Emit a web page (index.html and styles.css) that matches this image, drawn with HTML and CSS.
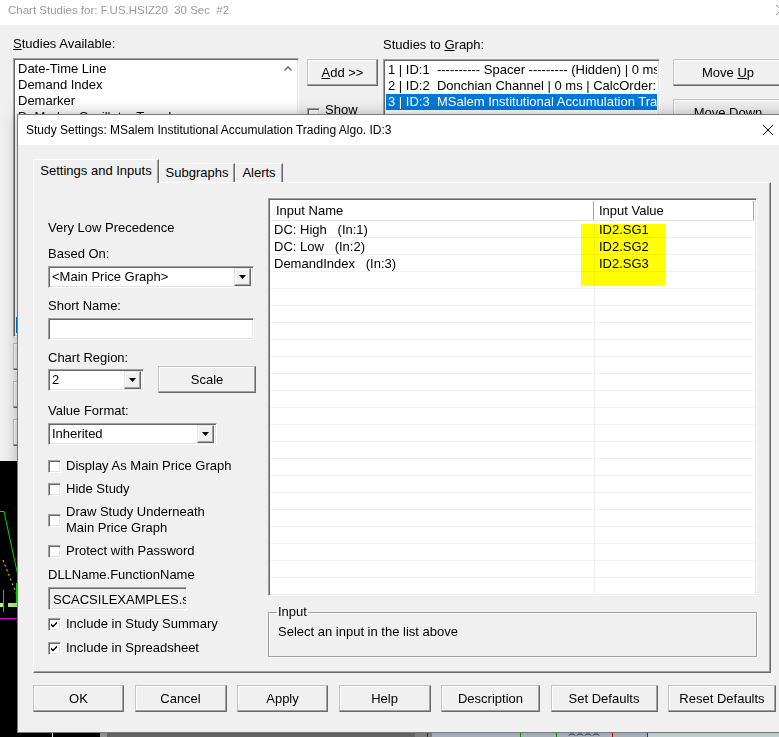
FILE: index.html
```html
<!DOCTYPE html>
<html lang="en">
<head>
	<meta charset="utf-8">
	<title>Chart Studies</title>
	<link rel="stylesheet" href="styles.css">
</head>
<body>
<div class="desktop">
	<!-- chart window behind everything -->
	<svg class="chart" width="779" height="737" viewBox="0 0 779 737" aria-hidden="true">
		<rect width="779" height="737" fill="#000"/>
		<polyline points="0,511.5 4,511.5 18,576" fill="none" stroke="#00e400"/>
		<line x1="3" y1="560" x2="18" y2="598" stroke="#ffff00" stroke-dasharray="2 3"/>
		<line x1="3.5" y1="590" x2="3.5" y2="612" stroke="#00e400"/>
		<line x1="16.5" y1="583" x2="16.5" y2="605" stroke="#00e400"/>
		<rect x="0" y="603" width="3" height="4" fill="#b8f08c"/>
		<rect x="8" y="603" width="9" height="4" fill="#b8f08c"/>
		<line x1="0" y1="618.5" x2="18" y2="618.5" stroke="#e000e0"/>
		<line x1="52.5" y1="728" x2="52.5" y2="737" stroke="#fff"/>
		<rect x="100" y="728" width="7" height="9" fill="#a0a0a0"/>
		<rect x="107" y="728" width="308" height="9" fill="#6e6e6e"/>
		<rect x="415" y="728" width="17" height="9" fill="#8c8c8c"/>
		<line x1="427.5" y1="728" x2="427.5" y2="737" stroke="#c00000"/>
		<rect x="432" y="728" width="215" height="9" fill="#b8c2cb"/>
		<rect x="647" y="728" width="132" height="9" fill="#d4e6e6"/>
		<line x1="520.5" y1="728" x2="520.5" y2="737" stroke="#00a000"/>
		<line x1="556.5" y1="728" x2="556.5" y2="737" stroke="#00a000"/>
		<line x1="612.5" y1="728" x2="612.5" y2="737" stroke="#d00000"/>
		<line x1="647.5" y1="728" x2="647.5" y2="737" stroke="#d00000"/>
		<path d="M569 735.5c1-2 5-2 6 0M577 735.5c1-2 5-2 6 0M585 735.5c1-2 5-2 6 0M593 735.5c1-2 5-2 6 0" fill="none" stroke="#222"/>
	</svg>

	<!-- Chart Studies window -->
	<section class="window studies">
		<header class="titlebar titlebar--inactive">
			<span>Chart Studies for: F.US.HSIZ20&nbsp; 30 Sec&nbsp; #2</span>
			<svg class="titlebar__close" width="10" height="10" viewBox="0 0 10 10" aria-hidden="true"><path d="M0 0L10 10M10 0L0 10" stroke="#999" stroke-width="1"/></svg>
		</header>

		<div class="studies__body">
			<div class="studies__available">
				<div class="studies__label"><u>S</u>tudies Available:</div>
				<div class="listbox listbox--available">
					<ul>
						<li>Date-Time Line</li>
						<li>Demand Index</li>
						<li>Demarker</li>
						<li>DeMarker Oscillator Type I</li>
						<li></li><li></li><li></li><li></li><li></li><li></li>
						<li></li><li></li><li></li><li></li><li></li><li></li>
						<li class="is-selected"></li>
					</ul>
					<svg class="listbox__arrow" width="8" height="5" viewBox="0 0 8 5" aria-hidden="true"><path d="M0.5 4.5L4 1L7.5 4.5" fill="none" stroke="#606060" stroke-width="1.3"/></svg>
				</div>
				<button class="btn studies__side-btn" tabindex="-1"></button>
				<button class="btn studies__side-btn" tabindex="-1"></button>
				<button class="btn studies__side-btn" tabindex="-1"></button>
			</div>

			<div class="studies__add">
				<button class="btn"><u>A</u>dd &gt;&gt;</button>
				<div class="check check--show"><span class="check__box"></span>Show</div>
			</div>

			<div class="studies__graph">
				<div class="studies__label">Studies to <u>G</u>raph:</div>
				<div class="listbox listbox--graph">
					<ul>
						<li>1 | ID:1&nbsp; ---------- Spacer --------- (Hidden) | 0 ms |</li>
						<li>2 | ID:2&nbsp; Donchian Channel | 0 ms | CalcOrder: 1</li>
						<li class="is-selected">3 | ID:3&nbsp; MSalem Institutional Accumulation Trad</li>
					</ul>
				</div>
			</div>

			<div class="studies__move">
				<button class="btn">Move <u>U</u>p</button>
				<button class="btn">Move <u>D</u>own</button>
			</div>
		</div>
	</section>

	<!-- Study Settings dialog -->
	<section class="window dialog" role="dialog" aria-label="Study Settings">
		<header class="titlebar">
			<span>Study Settings: MSalem Institutional Accumulation Trading Algo. ID:3</span>
			<svg class="titlebar__close" width="10" height="10" viewBox="0 0 10 10" aria-hidden="true"><path d="M0 0L10 10M10 0L0 10" stroke="#000" stroke-width="1"/></svg>
		</header>

		<div class="dialog__body">
			<nav class="tabs">
				<span class="tab tab--active">Settings and Inputs</span>
				<span class="tab tab--subgraphs">Subgraphs</span>
				<span class="tab tab--alerts">Alerts</span>
			</nav>

			<div class="tab-panel">
				<div class="settings">
					<div class="settings__note">Very Low Precedence</div>

					<div class="field">
						<span>Based On:</span>
						<div class="combo combo--based">
							<span class="combo__value">&lt;Main Price Graph&gt;</span>
							<span class="combo__btn"></span>
						</div>
					</div>

					<div class="field">
						<span>Short Name:</span>
						<div class="textbox textbox--short"></div>
					</div>

					<div class="field">
						<span>Chart Region:</span>
						<div class="field__row">
							<div class="combo combo--region">
								<span class="combo__value">2</span>
								<span class="combo__btn"></span>
							</div>
							<button class="btn btn--scale">Scale</button>
						</div>
					</div>

					<div class="field">
						<span>Value Format:</span>
						<div class="combo combo--format">
							<span class="combo__value">Inherited</span>
							<span class="combo__btn"></span>
						</div>
					</div>

					<div class="checks checks--options">
						<div class="check"><span class="check__box"></span>Display As Main Price Graph</div>
						<div class="check"><span class="check__box"></span>Hide Study</div>
						<div class="check"><span class="check__box"></span>Draw Study Underneath<br>Main Price Graph</div>
						<div class="check"><span class="check__box"></span>Protect with Password</div>
					</div>

					<div class="field field--dll">
						<span>DLLName.FunctionName</span>
						<div class="textbox textbox--dll">SCACSILEXAMPLES.s</div>
					</div>

					<div class="checks checks--include">
						<div class="check"><span class="check__box is-checked"></span>Include in Study Summary</div>
						<div class="check"><span class="check__box is-checked"></span>Include in Spreadsheet</div>
					</div>
				</div>

				<div class="inputs">
					<div class="listview">
						<div class="listview__head">
							<span class="listview__col listview__col--name">Input Name</span>
							<span class="listview__col listview__col--value">Input Value</span>
						</div>
						<div class="listview__rows">
							<div class="listview__row"><span class="listview__col listview__col--name">DC: High&nbsp;&nbsp; (In:1)</span><span class="listview__col listview__col--value">ID2.SG1</span></div>
							<div class="listview__row"><span class="listview__col listview__col--name">DC: Low&nbsp;&nbsp; (In:2)</span><span class="listview__col listview__col--value">ID2.SG2</span></div>
							<div class="listview__row"><span class="listview__col listview__col--name">DemandIndex&nbsp;&nbsp; (In:3)</span><span class="listview__col listview__col--value">ID2.SG3</span></div>
						</div>
						<div class="listview__marker" aria-hidden="true"></div>
					</div>

					<fieldset class="groupbox">
						<legend>Input</legend>
						Select an input in the list above
					</fieldset>
				</div>
			</div>

			<div class="dialog__buttons">
				<button class="btn btn--ok">OK</button>
				<button class="btn btn--cancel">Cancel</button>
				<button class="btn btn--apply">Apply</button>
				<button class="btn btn--help">Help</button>
				<button class="btn btn--desc">Description</button>
				<button class="btn btn--set">Set Defaults</button>
				<button class="btn btn--reset">Reset Defaults</button>
			</div>
		</div>
	</section>
</div>
</body>
</html>
```

FILE: styles.css
```css
/* PAGE */
* {
	box-sizing: border-box;
}
html,
body {
	margin: 0;
	height: 100%;
}
body {
	background: #000;
	color: #000;
	font: 13px/16px "Liberation Sans", Arial, sans-serif;
	overflow: hidden;
}
ul {
	list-style: none;
	margin: 0;
	padding: 0;
}
button {
	color: inherit;
	font: inherit;
	padding: 0;
}
.desktop {
	height: 737px;
	overflow: hidden;
	position: relative;
	width: 779px;
}
.chart {
	display: block;
	left: 0;
	position: absolute;
	top: 0;
}

/* WINDOW CHROME */
.window {
	background: #f0f0f0;
	position: absolute;
}
.titlebar {
	align-items: center;
	background: #fff;
	display: flex;
	font-size: 11.5px;
	justify-content: space-between;
	padding-left: 8px;
	white-space: nowrap;
}
.titlebar--inactive {
	color: #999;
}

/* classic 3d edges */
.btn {
	background: #f0f0f0;
	border: 1px solid;
	border-color: #c4c4c4 #696969 #696969 #c4c4c4;
	box-shadow: inset -1px -1px #a0a0a0, inset 1px 1px #fff;
	height: 27px;
	text-align: center;
}
.listbox,
.textbox,
.combo,
.listview,
.check__box {
	border: 1px solid;
	border-color: #a0a0a0 #fff #fff #a0a0a0;
	box-shadow: inset 1px 1px #696969, inset -1px -1px #e3e3e3;
}

/* CHART STUDIES WINDOW */
.studies {
	height: 461px;
	left: 0;
	top: 0;
	width: 800px;
}
.studies .titlebar {
	height: 25px;
	padding-bottom: 5px;
	padding-right: 14px;
}
.studies__body {
	align-items: flex-start;
	display: flex;
	padding: 11px 0 0 13px;
}
.studies__label {
	height: 16px;
}
.studies__available {
	display: flex;
	flex-direction: column;
	width: 286px;
}
.listbox {
	background: #fff;
	overflow: hidden;
	padding: 2px;
	position: relative;
	white-space: nowrap;

	li {
		height: 16px;
		overflow: hidden;
		padding-left: 2px;
	}
	.is-selected {
		background: #0078d7;
		color: #fff;
	}
}
.listbox--available {
	height: 279px;
	margin-top: 6px;
}
.listbox__arrow {
	position: absolute;
	right: 6px;
	top: 7px;
}
.studies__side-btn {
	margin-top: 6px;
	width: 110px;
}
.studies__side-btn + .studies__side-btn {
	margin-top: 11px;
}
.studies__add {
	margin: 23px 0 0 8px;
	width: 71px;

	.btn {
		width: 71px;
	}
}
.check--show {
	align-items: flex-start;
	margin-top: 13px;

	.check__box {
		margin-top: 9px;
	}
}
.studies__graph {
	margin: 1px 0 0 5px;
	width: 277px;
}
.listbox--graph {
	height: 278px;
	margin-top: 6px;
}
.studies__move {
	display: flex;
	flex-direction: column;
	gap: 13px;
	margin: 23px 0 0 13px;
	width: 110px;
}

/* STUDY SETTINGS DIALOG */
.dialog {
	border: 1px solid #7a7a7a;
	box-shadow: 0 0 14px rgba(0, 0, 0, 0.28);
	height: 619px;
	left: 17px;
	top: 114px;
	width: 775px;

	.titlebar {
		font-size: 12px;
		height: 30px;
		padding-right: 18px;
	}
}
.dialog__body {
	padding: 14px 0 0 15px;
}
.tabs {
	align-items: flex-end;
	display: flex;
	height: 23px;
	position: relative;
	z-index: 1;
}
.tab {
	background: #f0f0f0;
	border: 1px solid;
	border-bottom: 0;
	border-color: #fff #696969 transparent #fff;
	box-shadow: inset -1px 0 #a0a0a0;
	height: 19px;
	line-height: 18px;
	text-align: center;
	white-space: nowrap;
}
.tab--active {
	height: 24px;
	line-height: 22px;
	margin-bottom: -1px;
	width: 126px;
}
.tab--subgraphs {
	width: 76px;
}
.tab--alerts {
	width: 48px;
}
.tab-panel {
	border: 1px solid;
	border-color: #fff #696969 #696969 #fff;
	box-shadow: inset -1px -1px #a0a0a0;
	display: grid;
	gap: 12px;
	grid-template-columns: 208px 489px;
	height: 491px;
	padding: 15px 0 0 14px;
	width: 738px;
}

/* left column */
.settings {
	display: flex;
	flex-direction: column;
}
.settings__note {
	margin-top: 22px;
}
.field {
	display: flex;
	flex-direction: column;
	gap: 4px;
	margin-top: 10px;
}
.field__row {
	align-items: center;
	display: flex;
	gap: 14px;
	margin-top: -4px;
}
.field--dll {
	margin-top: 8px;
}
.combo {
	align-items: center;
	background: #fff;
	display: flex;
	height: 22px;
	padding: 2px;
}
.combo__value {
	flex: 1;
	overflow: hidden;
	padding-left: 1px;
	white-space: nowrap;
}
.combo__btn {
	background: #f0f0f0 no-repeat center / 7px 4px url("data:image/svg+xml,%3Csvg xmlns='http://www.w3.org/2000/svg' width='7' height='4'%3E%3Cpath d='M0 0h7L3.5 4z'/%3E%3C/svg%3E");
	border: 1px solid;
	border-color: #e3e3e3 #696969 #696969 #e3e3e3;
	box-shadow: inset -1px -1px #a0a0a0, inset 1px 1px #fff;
	height: 18px;
	width: 17px;
}
.combo--based {
	width: 206px;
}
.combo--region {
	width: 96px;
}
.combo--format {
	width: 169px;
}
.btn--scale {
	width: 98px;
}
.textbox {
	background: #fff;
	height: 22px;
	overflow: hidden;
	padding: 3px 4px;
	white-space: nowrap;
}
.textbox--short {
	width: 206px;
}
.textbox--dll {
	background: #f0f0f0;
	height: 23px;
	padding-top: 4px;
	width: 139px;
}
.checks {
	display: flex;
	flex-direction: column;
	gap: 7px;
}
.checks--options {
	margin-top: 13px;
}
.checks--include {
	gap: 8px;
	margin-top: 6px;
}
.check {
	align-items: center;
	display: flex;
	gap: 5px;
	white-space: nowrap;
}
.check__box {
	background: #fff center / 9px 9px no-repeat;
	flex: none;
	height: 13px;
	width: 13px;
}
.check__box.is-checked {
	background-image: url("data:image/svg+xml,%3Csvg xmlns='http://www.w3.org/2000/svg' width='9' height='9'%3E%3Cpath d='M1 3.5l2 2 4-4v2l-4 4-2-2z'/%3E%3C/svg%3E");
}

/* right column */
.inputs {
	display: flex;
	flex-direction: column;
}
.listview {
	background: #fff;
	display: flex;
	flex-direction: column;
	height: 398px;
	overflow: hidden;
	padding: 2px 2px 0;
	position: relative;
}
.listview__head {
	border-bottom: 1px solid #e5e5e5;
	display: flex;
	flex: none;
	height: 20px;
	width: 483px;

	.listview__col {
		border-right: 1px solid #a9a9a9;
		line-height: 19px;
	}
}
.listview__col--name {
	padding-left: 5px;
	width: 323px;
}
.listview__col--value {
	padding-left: 5px;
	width: 160px;
}
.listview__rows {
	background:
		linear-gradient(to right, transparent 323px, #f0f0f0 323px 324px, transparent 324px),
		repeating-linear-gradient(to bottom, transparent 0 16px, #f0f0f0 16px 17px);
	flex: 1;
	padding-top: 1px;
}
.listview__row {
	display: flex;
	height: 17px;
	white-space: nowrap;

	.listview__col--name {
		padding-left: 3px;
	}
}
.listview__marker {
	background: #ffff00;
	height: 62px;
	left: 312px;
	mix-blend-mode: multiply;
	position: absolute;
	top: 25px;
	width: 84px;
}
.groupbox {
	border: 1px solid #a0a0a0;
	box-shadow: inset 1px 1px #fff, 1px 1px #fff;
	margin: 8px 0 0;
	min-width: 0;
	padding: 4px 8px 16px 9px;
	width: 489px;

	legend {
		margin-left: -1px;
		padding: 0 1px;
	}
}

/* bottom buttons */
.dialog__buttons {
	display: flex;
	justify-content: space-between;
	margin-top: 12px;
	width: 743px;
}
.btn--ok,
.btn--apply {
	width: 91px;
}
.btn--cancel,
.btn--help {
	width: 92px;
}
.btn--desc {
	width: 99px;
}
.btn--set {
	width: 107px;
}
.btn--reset {
	width: 108px;
}
```
